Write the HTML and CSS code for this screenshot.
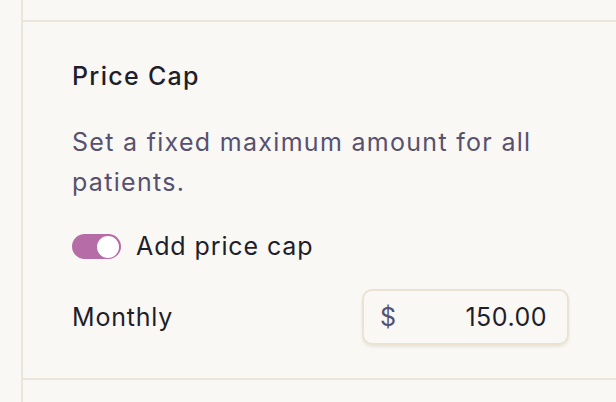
FILE: index.html
```html
<!DOCTYPE html>
<html>
<head>
<meta charset="utf-8">
<link rel="stylesheet" href="styles.css">
</head>
<body>
<div class="page">
  <div class="panel">
    <div class="top"></div>
    <section class="section">
      <h2 class="title">Price Cap</h2>
      <p class="desc">Set a fixed maximum amount for all patients.</p>
      <label class="toggle-row">
        <span class="toggle"><span class="knob"></span></span>
        <span class="toggle-label">Add price cap</span>
      </label>
      <div class="field-row">
        <span class="field-label">Monthly</span>
        <div class="input">
          <span class="currency">$</span>
          <span class="amount">150.00</span>
        </div>
      </div>
    </section>
  </div>
</div>
</body>
</html>
```
FILE: styles.css
```css
html, body {
  margin: 0;
  padding: 0;
  background: #f9f8f4;
}
body {
  font-family: Inter, "Noto Sans", sans-serif;
  color: #1f1e2b;
}
.page {
  padding-left: 21px;
  height: 402px;
  overflow: hidden;
}
.panel {
  border-left: 2px solid #ece5db;
  height: 100%;
}
.top {
  height: 20px;
}
.section {
  border-top: 2px solid #ece5db;
  border-bottom: 2px solid #ece5db;
  padding: 37px 47px 0 49px;
  height: 360px;
  box-sizing: border-box;
}
.title {
  margin: 0;
  font-size: 25px;
  line-height: 34px;
  font-weight: 500;
  letter-spacing: 1.3px;
}
.desc {
  margin: 29px 0 0;
  font-size: 25px;
  line-height: 40px;
  color: #57516f;
  letter-spacing: 1.3px;
  max-width: 480px;
}
.toggle-row {
  display: flex;
  align-items: center;
  gap: 15px;
  margin-top: 24px;
}
.toggle {
  width: 49px;
  height: 25px;
  border-radius: 13px;
  background: #b66ca6;
  display: flex;
  align-items: center;
  justify-content: flex-end;
  padding: 0 2px;
  box-sizing: border-box;
  margin-top: 1px;
}
.knob {
  width: 22px;
  height: 22px;
  border-radius: 50%;
  background: #fff;
}
.toggle-label {
  font-size: 25px;
  line-height: 40px;
  letter-spacing: 0.9px;
}
.field-row {
  display: flex;
  align-items: center;
  justify-content: space-between;
  margin-top: 23px;
}
.field-label {
  font-size: 25px;
  letter-spacing: 0.8px;
}
.input {
  width: 207px;
  height: 56px;
  box-sizing: border-box;
  border: 2px solid #ebe2d2;
  border-radius: 10px;
  box-shadow: 0 2px 3px rgba(120, 100, 70, 0.12);
  display: flex;
  align-items: center;
  justify-content: space-between;
  padding: 0 20px 0 16px;
  font-size: 25px;
}
.currency {
  color: #57516f;
}
.amount {
  color: #1f1e2b;
  letter-spacing: 0.5px;
}
```
